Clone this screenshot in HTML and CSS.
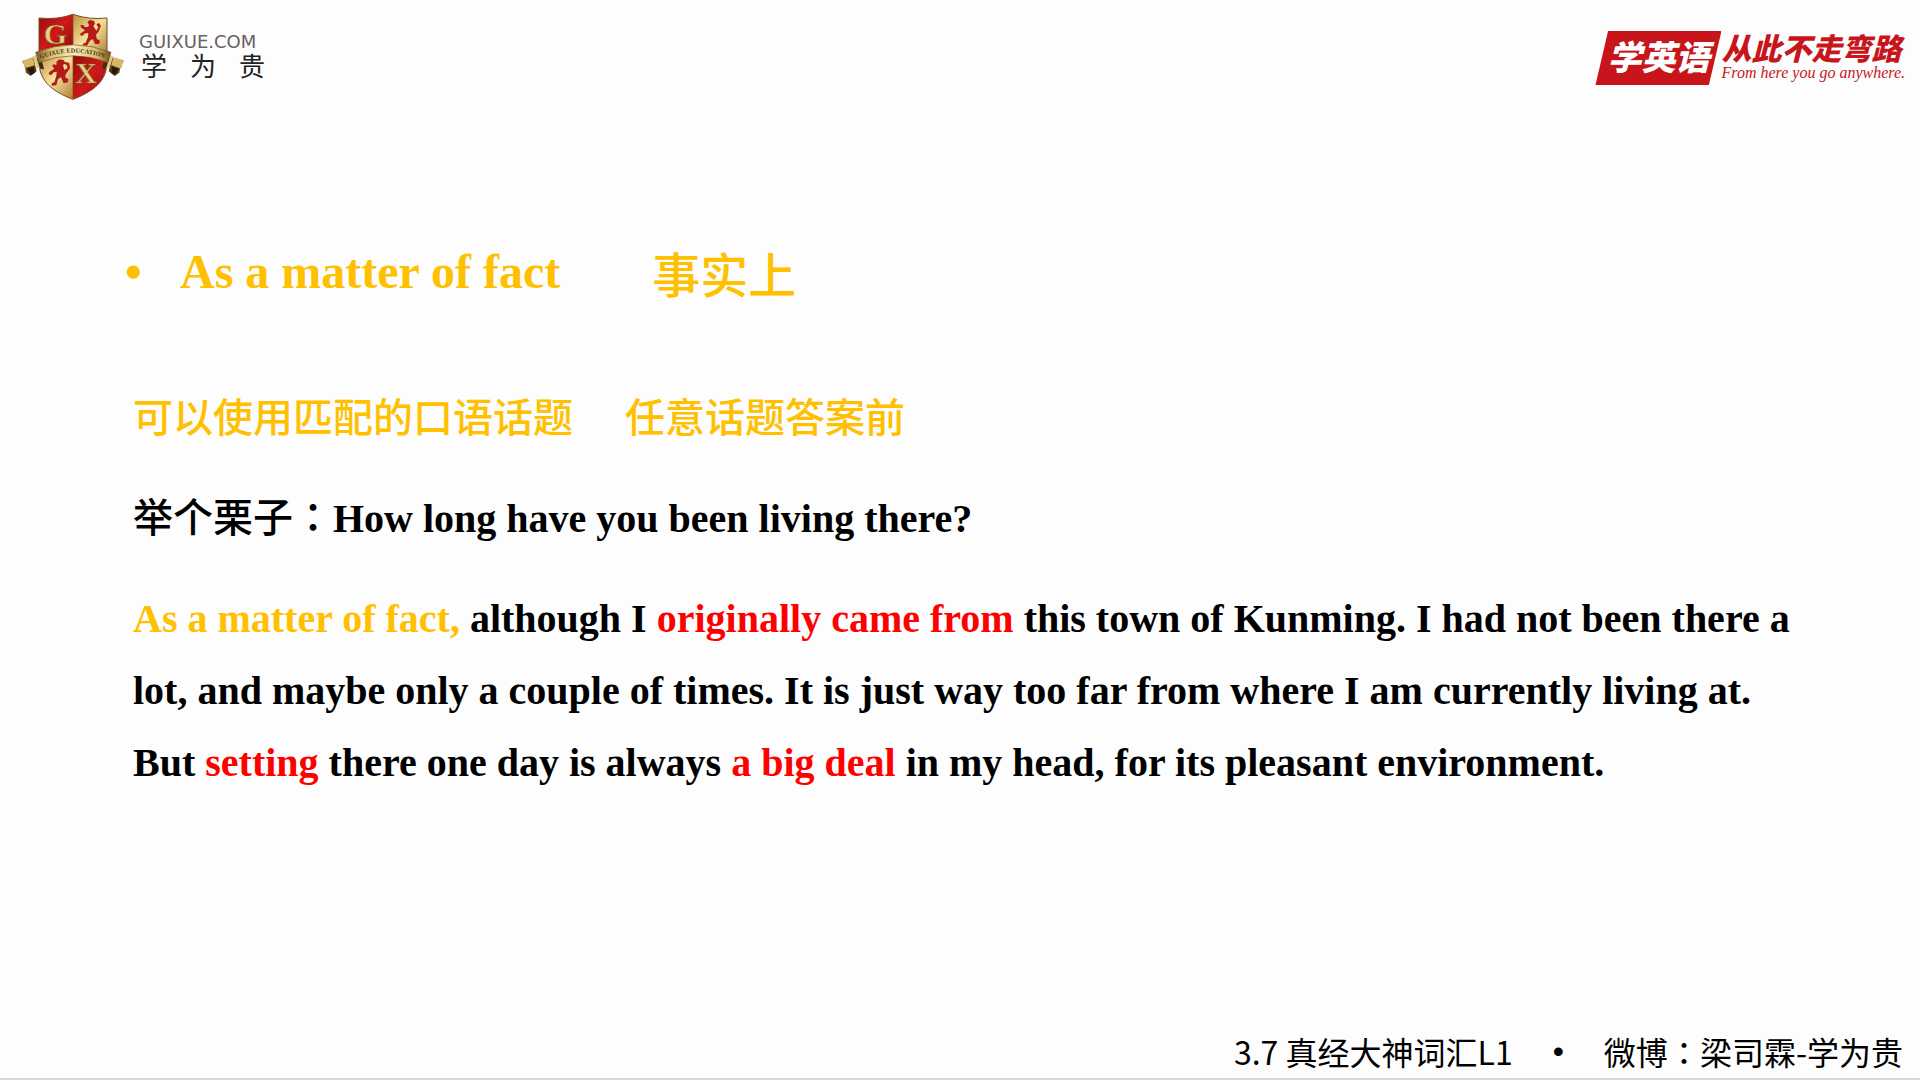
FILE: index.html
```html
<!DOCTYPE html>
<html lang="zh-CN">
<head>
<meta charset="utf-8">
<title>3.7 真经大神词汇L1</title>
<link rel="stylesheet" href="styles.css">
</head>
<body>
<header class="top">
  <div class="brand">
    <svg class="crest" viewBox="60 36 318 270" aria-hidden="true">
      <defs>
        <linearGradient id="red" x1="0" y1="0" x2="1" y2="1">
          <stop offset="0" stop-color="#8e0c0c"/><stop offset=".5" stop-color="#d0181a"/><stop offset="1" stop-color="#8a0a0c"/>
        </linearGradient>
        <linearGradient id="gold" x1="0" y1="0" x2="1" y2="1">
          <stop offset="0" stop-color="#b98a35"/><stop offset=".5" stop-color="#f6e2a0"/><stop offset="1" stop-color="#a87a2a"/>
        </linearGradient>
        <linearGradient id="ribbon" x1="0" y1="0" x2="1" y2="0">
          <stop offset="0" stop-color="#7a5a20"/><stop offset=".2" stop-color="#d9bd70"/><stop offset=".5" stop-color="#fbeebb"/><stop offset=".8" stop-color="#d9bd70"/><stop offset="1" stop-color="#6e4f1a"/>
        </linearGradient>
        <clipPath id="shield"><path d="M117 54Q172 60 219 43Q266 60 321 54V185C321 245 278 275 219 298C160 275 117 245 117 185Z"/></clipPath>
      </defs>
      <g clip-path="url(#shield)">
        <path fill="url(#red)" d="M110 36H219V165H110Z"/>
        <path fill="url(#gold)" d="M219 36H325V165H219Z"/>
        <path fill="url(#gold)" d="M110 160H219V305H110Z"/>
        <path fill="url(#red)" d="M219 160H325V305H219Z"/>
      </g>
      <path d="M117 54Q172 60 219 43Q266 60 321 54V185C321 245 278 275 219 298C160 275 117 245 117 185Z" fill="none" stroke="#7c4a20" stroke-width="3"/>
      <path d="M219 45V296" stroke="#7c4a20" stroke-width="2"/>
      <text class="crest-letter" x="131" y="131">G</text>
      <text class="crest-letter" x="226" y="249">X</text>
      <path fill="#b41a18" d="M262 66l8-6 12 3 3 8-5 7 9 14 6-10-6-8 8-6 6 10-8 18-7 8 2 12 10 6-2 9-12 2-8-16-9 6-8 14-12 1-1-6 9-4 7-17 1-12-10 1-9 8-7-5 8-6 8-6-11-8-3-8 8 0 7 7 9-2 2-6z"/>
      <path fill="#b41a18" d="M170 184l9-6 13 3 3 9-6 6 4 14 10-6-3-9-7-3 3-7 12 5 2 15-12 16-3 10 10 7-1 9-13 3-8-18-9 6-5 18-14 1 0-7 8-3 6-20 1-12-9 2-8 9-8-5 6-7 12-8-7-9 5-4 8 2z"/>
      <path fill="#5d431b" d="M66 184l34-12 10 42-18 14-14-10-4-22zM372 182l-36-10-10 42 18 14 14-10 4-22z"/>
      <path fill="#d6b766" d="M68 182l30-10 6 24-30 8zM370 180l-30-8-6 24 30 10z"/>
      <path fill="#25190d" d="M82 206l20-7 2 20-12 6zM356 206l-20-7-2 20 12 6z"/>
      <path fill="#e3c983" d="M98 168l18-4 14 44-20-3zM340 168l-16-4-18 44 22-3z"/>
      <path fill="#3f2c12" d="M110 174l14 2 8 32-12-2zM328 174l-14 2-8 32 12-2z"/>
      <path fill="url(#ribbon)" stroke="#765520" stroke-width="2" d="M107 157Q219 112 333 157L323 188Q219 147 117 188Z"/>
      <path id="arc" fill="none" d="M121 176Q219 140 319 176"/>
      <text class="crest-motto"><textPath href="#arc">GUIXUE EDUCATION</textPath></text>
    </svg>
    <div class="brand-name">
      <span class="brand-url">GUIXUE.COM</span>
      <span class="brand-zh"><span>学</span><span>为</span><span>贵</span></span>
    </div>
  </div>
  <div class="slogan">
    <strong class="slogan-tag">学英语</strong>
    <div class="slogan-side">
      <strong class="slogan-main">从此不走弯路</strong>
      <em class="slogan-en">From here you go anywhere.</em>
    </div>
  </div>
</header>
<main class="slide">
  <h1 class="phrase"><span class="dot">•</span><span>As a matter of fact</span><span class="zh meaning">事实上</span></h1>
  <p class="topics zh"><span>可以使用匹配的口语话题</span><span>任意话题答案前</span></p>
  <p class="line"><span class="zh">举个栗子<span class="colon" lang="zh-TW">：</span></span>How long have you been living there?</p>
  <p class="line"><span class="gold">As a matter of fact,</span> although I <span class="red">originally came from</span> this town of Kunming. I had not been there a lot, and maybe only a couple of times. It is just way too far from where I am currently living at. But <span class="red">setting</span> there one day is always <span class="red">a big deal</span> in my head, for its pleasant environment.</p>
</main>
<footer class="bottom">
  <span>3.7 真经大神词汇L1</span><span class="separator">•</span><span>微博<span class="colon" lang="zh-TW">：</span>梁司霖-学为贵</span>
</footer>
</body>
</html>
```
FILE: styles.css
```css
* { box-sizing: border-box; }

body {
  margin: 0;
  min-height: 100vh;
  display: flex;
  flex-direction: column;
  background: #fdfdfd;
  color: #000;
  font-family: "Liberation Serif", "Noto Sans CJK SC", serif;
}

h1, p { margin: 0; }

.top {
  display: flex;
  justify-content: space-between;
  align-items: flex-start;
  padding: 12px 15px 0 20px;
}

.brand { display: flex; gap: 13px; }
.crest { width: 106px; height: 90px; }
.crest-letter { font: bold 90px "Liberation Serif", serif; fill: #e8cf86; stroke: #7a5420; stroke-width: 2px; }
.crest-motto { font: bold 19px "Liberation Serif", serif; fill: #4a3413; }

.brand-name {
  display: flex;
  flex-direction: column;
  width: 128px;
  padding-top: 20px;
}
.brand-url { font: 18px/20px "DejaVu Sans", sans-serif; color: #6a6060; }
.brand-zh {
  display: flex;
  justify-content: space-between;
  padding: 0 2px;
  font: 26px/26px "Noto Sans CJK SC", sans-serif;
  color: #222;
}

.slogan {
  display: flex;
  padding-top: 19px;
  color: #c8151c;
}
.slogan-tag {
  width: 126px;
  height: 54px;
  text-align: center;
  background: #c8151c;
  clip-path: polygon(10% 0, 100% 0, 90% 100%, 0 100%);
  color: #fff;
  font: italic 900 34px/50px "Noto Sans CJK SC", sans-serif;
}
.slogan-side { display: flex; flex-direction: column; }
.slogan-main { font: italic 900 30px/32px "Noto Sans CJK SC", sans-serif; }
.slogan-en { font: italic 16px/20px "Liberation Serif", serif; }

.slide { padding: 134px 110px 0 133px; }

.zh { font-family: "Noto Sans CJK SC", sans-serif; font-weight: 500; }
.colon { font-family: "Noto Sans CJK TC", sans-serif; }
.gold { color: #ffc000; }
.red { color: #f00; }

.phrase {
  display: flex;
  margin-bottom: 71px;
  margin-left: -8px;
  color: #ffc000;
  font-size: 48px;
  line-height: 72px;
}
.dot { width: 55px; }
.meaning { margin-left: 92px; }

.topics, .line {
  margin-bottom: 28px;
  font-size: 40px;
  line-height: 72px;
}
.topics { display: flex; gap: 52px; color: #ffc000; }
.line { font-weight: bold; }

.bottom {
  display: flex;
  justify-content: flex-end;
  gap: 40px;
  margin-top: auto;
  padding: 0 17px 2px 0;
  border-bottom: 2px solid #d8d8d8;
  font: 32px/50px "Noto Sans CJK SC", sans-serif;
}
.separator { font-family: "Liberation Sans", sans-serif; }
```
